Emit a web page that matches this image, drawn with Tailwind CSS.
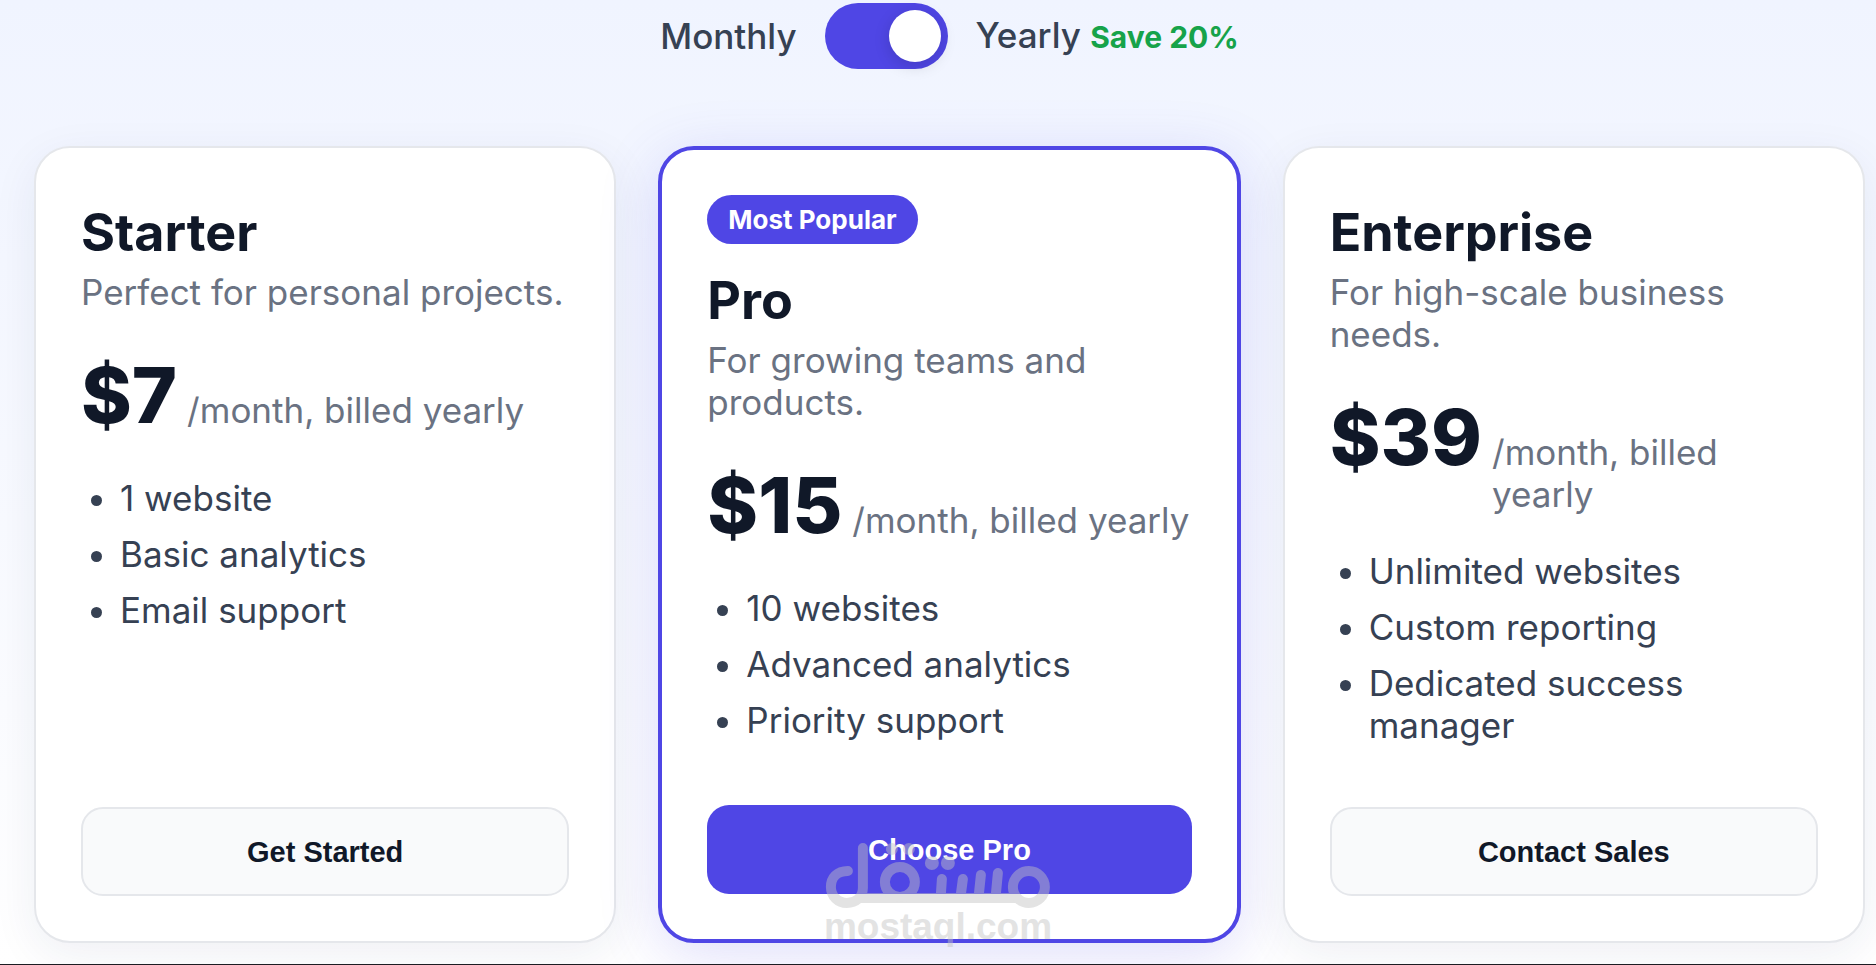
<!DOCTYPE html>
<html lang="en">
<head>
  <meta charset="UTF-8">
  <meta name="viewport" content="width=device-width, initial-scale=1.0">
  <script src="https://cdn.jsdelivr.net/npm/@tailwindcss/browser@4"></script>
  <title>Pricing</title>
</head>
<body class="bg-white font-['Inter',sans-serif] text-[35px] leading-[42px] text-gray-700">
  <div class="relative min-h-screen overflow-hidden border-b border-[#1c1c22] bg-linear-to-b from-[#f0f4ff] to-white pt-[3px] pr-[11px] pb-[20px] pl-[34px]">

    <!-- Billing toggle -->
    <div class="flex items-center justify-center gap-[28px]">
      <span class="font-medium">Monthly</span>
      <button type="button" role="switch" aria-checked="true" aria-label="Yearly billing" class="flex h-[66px] w-[123px] items-center justify-end rounded-full bg-[#4f46e5] p-[7px]">
        <span class="size-[52px] rounded-full bg-white shadow-[0_4px_16px_rgba(0,0,0,0.15)]"></span>
      </button>
      <span class="font-medium">Yearly <span class="text-[30px] font-bold text-[#16a34a]">Save 20%</span></span>
    </div>

    <!-- Plans -->
    <main class="mt-[77px] grid grid-cols-3 gap-[42px]">
      <section class="flex flex-col rounded-[36px] border-2 border-gray-200 bg-white p-[45px] shadow-[0_12px_46px_rgba(30,41,100,0.07)]">
        <h3 class="mt-[8px] mb-[7px] text-[52px] leading-[63px] font-bold text-gray-900">Starter</h3>
        <p class="text-gray-500">Perfect for personal projects.</p>
        <div class="mt-[36px] mb-[35px] flex items-baseline gap-[10px]">
          <span class="text-[77px] leading-[93px] font-extrabold text-gray-900">$7</span>
          <span class="text-gray-500">/month, billed yearly</span>
        </div>
        <ul class="mb-[61px] flex list-disc flex-col gap-[14px] pl-[39px]">
          <li>1 website</li>
          <li>Basic analytics</li>
          <li>Email support</li>
        </ul>
        <button type="button" class="mt-auto h-[89px] rounded-[22px] border-2 border-gray-200 bg-gray-50 font-['Liberation_Sans',sans-serif] text-[29px] font-bold text-gray-900">Get Started</button>
      </section>

      <section class="flex flex-col rounded-[36px] border-4 border-[#4f46e5] bg-white p-[45px] shadow-[0_12px_60px_rgba(79,70,229,0.18)]">
        <span class="mb-[17px] self-start rounded-full bg-[#4f46e5] px-[21px] text-[26px] leading-[49px] font-bold text-white">Most Popular</span>
        <h3 class="mt-[8px] mb-[7px] text-[52px] leading-[63px] font-bold text-gray-900">Pro</h3>
        <p class="text-gray-500">For growing teams and products.</p>
        <div class="mt-[36px] mb-[35px] flex items-baseline gap-[10px]">
          <span class="text-[77px] leading-[93px] font-extrabold text-gray-900">$15</span>
          <span class="text-gray-500">/month, billed yearly</span>
        </div>
        <ul class="mb-[61px] flex list-disc flex-col gap-[14px] pl-[39px]">
          <li>10 websites</li>
          <li>Advanced analytics</li>
          <li>Priority support</li>
        </ul>
        <button type="button" class="mt-auto h-[89px] rounded-[22px] bg-[#4f46e5] font-['Liberation_Sans',sans-serif] text-[29px] font-bold text-white">Choose Pro</button>
      </section>

      <section class="flex flex-col rounded-[36px] border-2 border-gray-200 bg-white p-[45px] shadow-[0_12px_46px_rgba(30,41,100,0.07)]">
        <h3 class="mt-[8px] mb-[7px] text-[52px] leading-[63px] font-bold text-gray-900">Enterprise</h3>
        <p class="text-gray-500">For high-scale business needs.</p>
        <div class="mt-[36px] mb-[35px] flex items-baseline gap-[10px]">
          <span class="text-[77px] leading-[93px] font-extrabold text-gray-900">$39</span>
          <span class="text-gray-500">/month, billed yearly</span>
        </div>
        <ul class="mb-[61px] flex list-disc flex-col gap-[14px] pl-[39px]">
          <li>Unlimited websites</li>
          <li>Custom reporting</li>
          <li>Dedicated success manager</li>
        </ul>
        <button type="button" class="mt-auto h-[89px] rounded-[22px] border-2 border-gray-200 bg-gray-50 font-['Liberation_Sans',sans-serif] text-[29px] font-bold text-gray-900">Contact Sales</button>
      </section>
    </main>

    <!-- Watermark -->
    <div class="pointer-events-none absolute bottom-[18px] left-1/2 flex -translate-x-1/2 flex-col items-center text-[#c2c2c2] opacity-45">
      <svg class="h-[66px] w-[226px]" viewBox="0 0 226 66" fill="none" stroke="currentColor" stroke-width="10" stroke-linecap="round" stroke-linejoin="round">
        <path d="M23 29C12 29 6 36 6 45C6 54 13 61 22 61C31 61 38 55 38 46V6M34 56H192M116 52L117 37M136 52L138 37M154 52L156 33M171 52L173 31"/>
        <circle cx="75" cy="40" r="15"/>
        <circle cx="204" cy="45" r="16"/>
        <g fill="currentColor" stroke="none">
          <circle cx="67" cy="7" r="6"/>
          <circle cx="84" cy="7" r="6"/>
          <circle cx="107" cy="21" r="7"/>
          <circle cx="123" cy="21" r="7"/>
        </g>
      </svg>
      <span class="font-['Liberation_Sans',sans-serif] text-[37px] leading-[38px] font-bold">mostaql.com</span>
    </div>
  </div>
</body>
</html>
